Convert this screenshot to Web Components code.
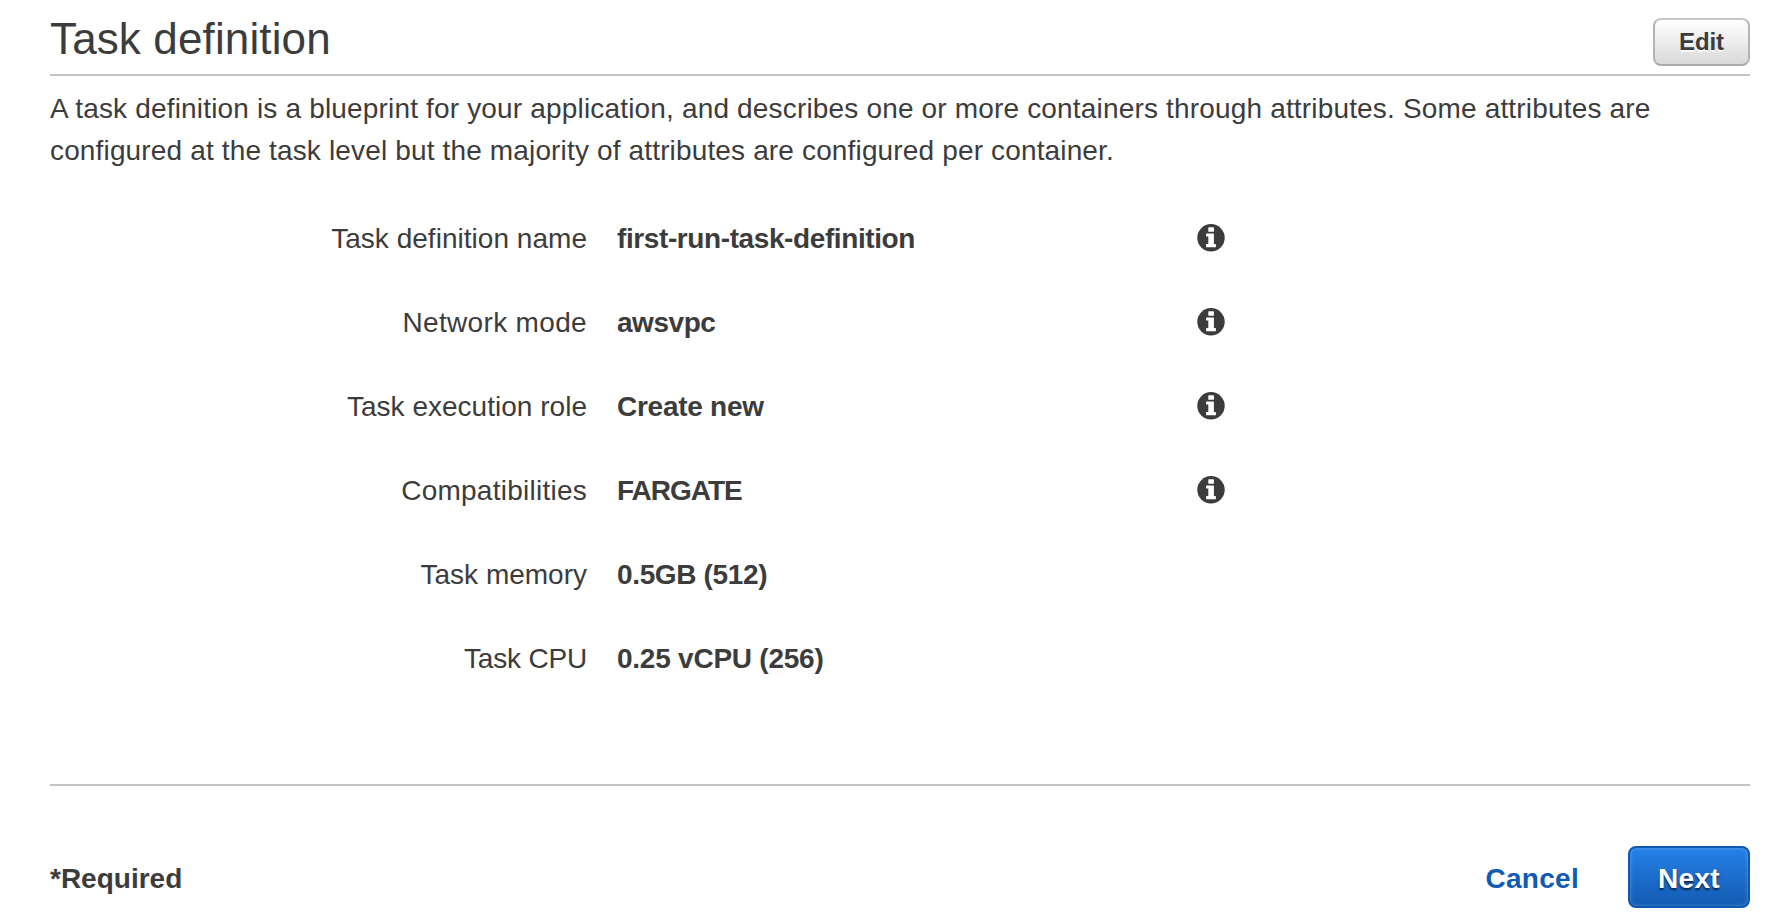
<!DOCTYPE html>
<html lang="en">
<head>
<meta charset="utf-8">
<title>Task definition</title>
<style>
body{margin:0;background:#fff;color:#3c3c3c;font:28px/42px "Liberation Sans",Arial,sans-serif}
</style>
</head>
<body>
<task-definition-page></task-definition-page>

<template id="page">
<style>
:host{display:flex;flex-direction:column;height:924px;box-sizing:border-box;padding:0 16px 0 50px}
.intro{margin:0;padding-top:12px;letter-spacing:.17px;white-space:nowrap}
.intro span{display:block}
.intro span+span{letter-spacing:.15px}
.rows{margin-top:24px}
</style>
<section-header>Task definition<action-button slot="action">Edit</action-button></section-header>
<p class="intro"><span>A task definition is a blueprint for your application, and describes one or more containers through attributes. Some attributes are</span> <span>configured at the task level but the majority of attributes are configured per container.</span></p>
<div class="rows">
<detail-row info style="--label-spacing:.03px;--value-spacing:-.4px"><span slot="label">Task definition name</span>first-run-task-definition</detail-row>
<detail-row info style="--label-spacing:.34px;--value-spacing:-.45px"><span slot="label">Network mode</span>awsvpc</detail-row>
<detail-row info style="--label-spacing:.02px;--value-spacing:-.27px"><span slot="label">Task execution role</span>Create new</detail-row>
<detail-row info style="--label-spacing:.25px;--value-spacing:-1px"><span slot="label">Compatibilities</span>FARGATE</detail-row>
<detail-row style="--label-spacing:0px;--value-spacing:-.36px"><span slot="label">Task memory</span>0.5GB (512)</detail-row>
<detail-row style="--label-spacing:-.178px;--value-spacing:-.24px"><span slot="label">Task CPU</span>0.25 vCPU (256)</detail-row>
</div>
<wizard-footer>*Required<action-button slot="actions" variant="link">Cancel</action-button><action-button slot="actions" variant="primary">Next</action-button></wizard-footer>
</template>

<template id="header">
<style>
:host{display:flex;justify-content:space-between;align-items:flex-start;height:76px;box-sizing:border-box;border-bottom:2px solid #c4c4c4}
h2{margin:14px 0 0;font-size:44px;line-height:50px;font-weight:400;letter-spacing:.13px}
.action{margin-top:18px}
</style>
<h2><slot></slot></h2><div class="action"><slot name="action"></slot></div>
</template>

<template id="row">
<style>
:host{display:grid;grid-template-columns:537px 550px 28px;column-gap:30px;align-items:center;height:84px}
.label{padding-top:2px;text-align:right;letter-spacing:var(--label-spacing)}
.value{padding-top:2px;font-weight:700;letter-spacing:var(--value-spacing)}
info-icon{display:none}
:host([info]) info-icon{display:block}
</style>
<div class="label"><slot name="label"></slot></div><div class="value"><slot></slot></div><info-icon></info-icon>
</template>

<template id="info">
<style>
:host{display:block;width:28px;height:28px}
svg{display:block;width:100%;height:100%}
</style>
<svg viewBox="0 0 28 28" aria-hidden="true"><circle cx="14" cy="13.850" r="13.750" fill="#3c3c3c"/><path fill="#fff" d="M11.800 3.200h4.600q.5 0 .5.5v3.600q0 .5-.5.5h-4.600q-.5 0-.5-.5V3.700q0-.5.5-.5zM9.600 9.400h6.800q.5 0 .5.5V20h1.500q.5 0 .5.500v2.200q0 .5-.5.500H9.600q-.5 0-.5-.5v-2.200q0-.5.5-.5h1.700v-7.500H9.600q-.5 0-.5-.5V9.900q0-.5.5-.5z"/></svg>
</template>

<template id="button">
<style>
:host{display:block}
button{display:block;box-sizing:border-box;margin:0;padding:0;font:inherit;font-weight:700;color:inherit;cursor:pointer;width:97px;height:48px;font-size:24px;line-height:44px;letter-spacing:-.1px;border:2px solid;border-color:#c6c6c6 #b4b4b4 #a9a9a9;border-radius:8px;background:linear-gradient(#fff,#d9d9d9);text-shadow:0 2px 1px rgba(255,255,255,.8)}
:host([variant=link]) button{width:auto;height:62px;padding-top:3px;border:0;background:none;color:#0f5bb5;text-shadow:none;font-size:28px;line-height:59px;letter-spacing:.3px}
:host([variant=primary]) button{width:122px;height:62px;padding-top:3px;color:#fff;font-size:28px;line-height:55px;letter-spacing:.35px;border-color:#0f59b3;background:linear-gradient(#2680e8,#125bb2);box-shadow:inset 0 0 3px 1px rgba(255,255,255,.18);text-shadow:0 2px 2px rgba(0,0,0,.65)}
</style>
<button type="button"><slot></slot></button>
</template>

<template id="footer">
<style>
:host{display:flex;justify-content:space-between;align-items:center;margin-top:84px;border-top:2px solid #c4c4c4;padding-top:60px;font-weight:700}
.note{padding-top:3px}
.actions{display:flex;gap:49px}
</style>
<div class="note"><slot></slot></div><div class="actions"><slot name="actions"></slot></div>
</template>

<script>
const define = (tag, id) => customElements.define(tag, class extends HTMLElement {
  constructor() {
    super();
    this.attachShadow({ mode: 'open' }).append(document.getElementById(id).content.cloneNode(true));
  }
});
define('info-icon', 'info');
define('action-button', 'button');
define('section-header', 'header');
define('detail-row', 'row');
define('wizard-footer', 'footer');
define('task-definition-page', 'page');
</script>
</body>
</html>
